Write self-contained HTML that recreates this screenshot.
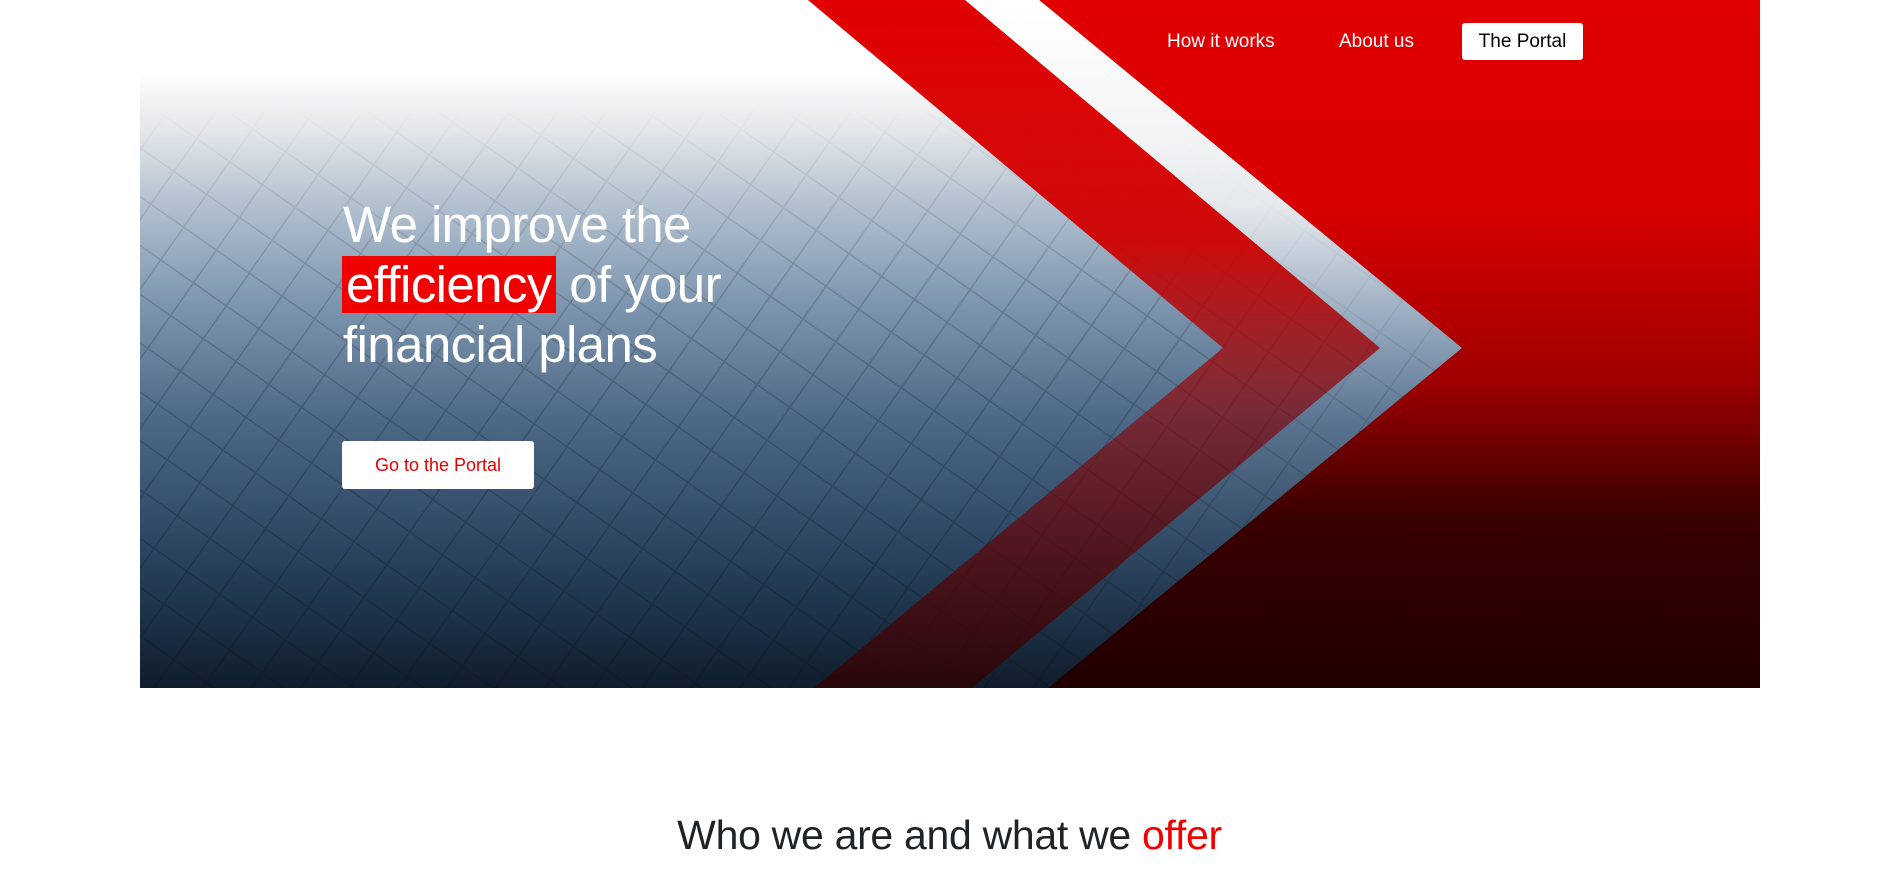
<!DOCTYPE html>
<html><head><meta charset="utf-8"><style>
html,body{margin:0;padding:0;background:#fff;width:1899px;height:880px;overflow:hidden;font-family:"Liberation Sans",sans-serif}
.hero{position:absolute;left:140px;top:0;width:1620px;height:688px;overflow:hidden;
background:linear-gradient(180deg,#fff 0px,#fff 70px,#e4e7ea 130px,#b5c3d1 200px,#7f97b0 300px,#4d6886 420px,#2a4460 550px,#0f1d2c 688px)}
svg{position:absolute;left:0;top:0}
.nav{position:absolute;top:23px;height:37px;line-height:37px;font-size:19px;color:#fff}
h1{position:absolute;left:343px;top:195px;margin:0;font-weight:normal;font-size:51px;line-height:60px;color:#fff;letter-spacing:-0.6px}
.hl{background:#f00000;padding:0 4px 0 4px;margin-left:-1px}
.btn{position:absolute;left:342px;top:441px;width:192px;height:48px;background:#fff;border-radius:3px;color:#e60000;font-size:18px;line-height:48px;text-align:center}
h2{position:absolute;left:0;width:1899px;top:812px;margin:0;text-align:center;font-weight:normal;font-size:41px;color:#1e2328;letter-spacing:-0.3px}
</style></head><body>
<div class="hero">
<svg width="1620" height="688" viewBox="140 0 1620 688">
<defs>
<linearGradient id="r" x1="0" y1="0" x2="0" y2="1">
<stop offset="0" stop-color="#e00000"/><stop offset="0.3" stop-color="#d80000"/><stop offset="0.55" stop-color="#a00000"/><stop offset="0.75" stop-color="#3a0000"/><stop offset="1" stop-color="#200000"/></linearGradient>
<linearGradient id="r2" x1="0" y1="0" x2="0" y2="1">
<stop offset="0" stop-color="#e00000"/><stop offset="0.35" stop-color="#d00000" stop-opacity="0.95"/><stop offset="0.6" stop-color="#900000" stop-opacity="0.6"/><stop offset="1" stop-color="#300000" stop-opacity="0.75"/></linearGradient>
<linearGradient id="w" x1="0" y1="0" x2="0" y2="1">
<stop offset="0" stop-color="#fff"/><stop offset="0.3" stop-color="#eef0f2" stop-opacity="0.85"/><stop offset="0.6" stop-color="#8aa0b8" stop-opacity="0.25"/><stop offset="1" stop-color="#223" stop-opacity="0"/></linearGradient>
<pattern id="g" width="40" height="40" patternUnits="userSpaceOnUse" patternTransform="rotate(35)">
<path d="M0 0H40M0 0V40" stroke="#0a1420" stroke-opacity="0.3" stroke-width="3" fill="none"/></pattern>
<linearGradient id="fade" x1="0" y1="0" x2="0" y2="1"><stop offset="0" stop-color="#fff" stop-opacity="0"/><stop offset="0.15" stop-color="#fff" stop-opacity="0"/><stop offset="0.4" stop-color="#fff" stop-opacity="0.6"/><stop offset="1" stop-color="#fff"/></linearGradient>
<mask id="m"><rect x="140" y="0" width="1620" height="688" fill="url(#fade)"/></mask>
</defs>
<rect x="140" y="0" width="1620" height="688" fill="url(#g)" mask="url(#m)"/>
<polygon points="1039,0 1760,0 1760,688 1048,688 1462,348" fill="url(#r)"/>
<polygon points="965,0 1039,0 1462,348 1048,688 972,688 1380,348" fill="url(#w)"/>
<polygon points="808,0 965,0 1380,348 972,688 814,688 1223,348" fill="url(#r2)"/>
</svg>
</div>
<div class="nav" style="left:1167px">How it works</div>
<div class="nav" style="left:1339px">About us</div>
<div class="nav" style="left:1462px;width:121px;background:#fff;color:#000;border-radius:3px;text-align:center">The Portal</div>
<h1>We improve the<br><span class="hl">efficiency</span> of your<br>financial plans</h1>
<div class="btn">Go to the Portal</div>
<h2>Who we are and what we <span style="color:#f00000">offer</span></h2>
</body></html>
